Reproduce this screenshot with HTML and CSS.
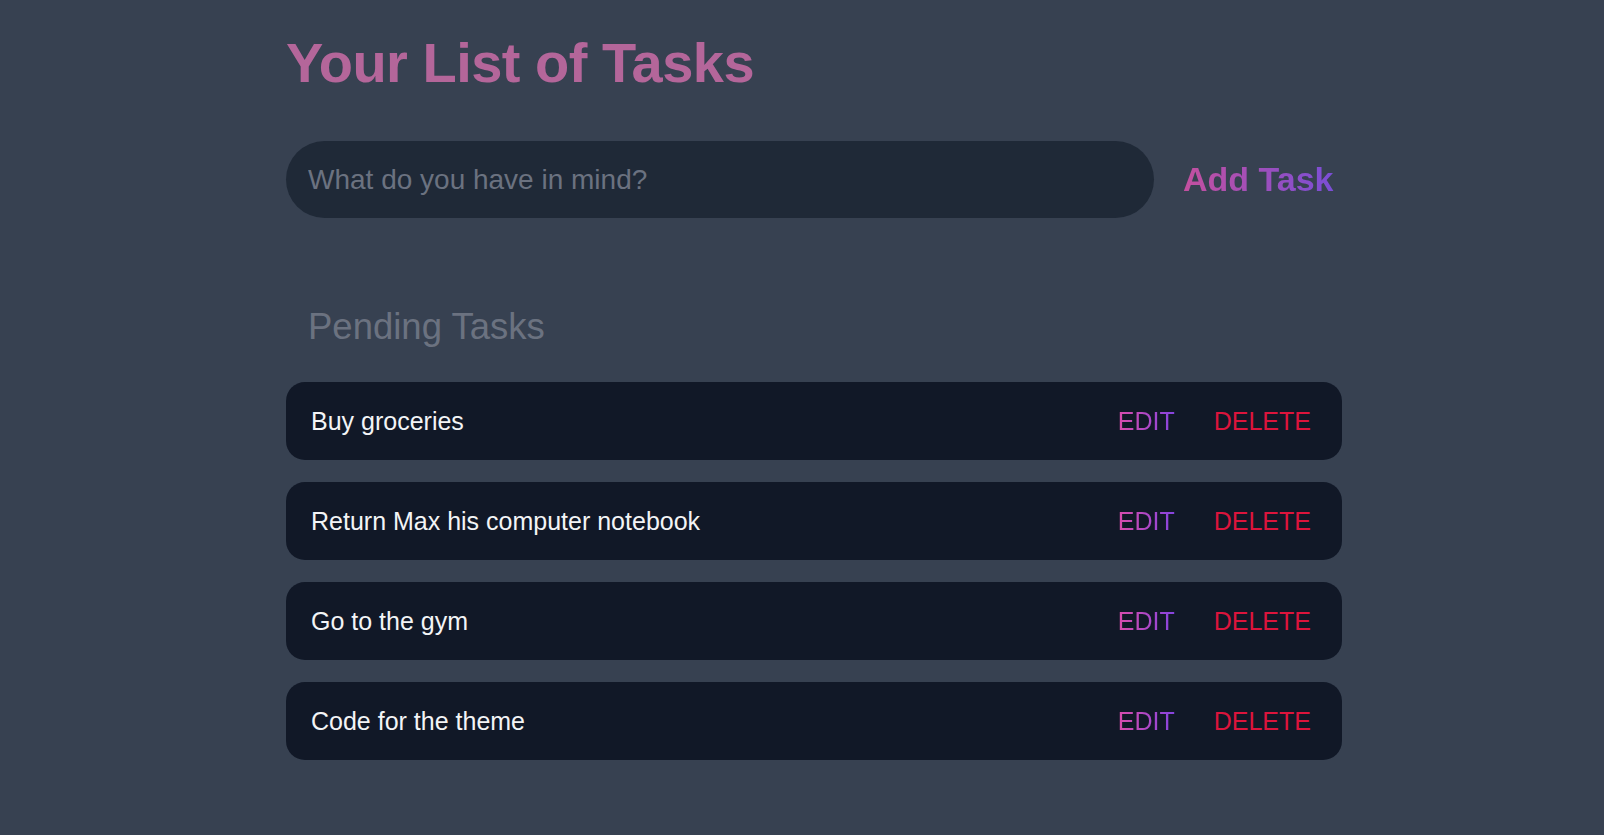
FILE: index.html
```html
<!DOCTYPE html>
<html lang="en">
<head>
<meta charset="utf-8">
<title>Your List of Tasks</title>
<link rel="stylesheet" href="styles.css">
</head>
<body>
<main class="app">
  <h1 class="title">Your List of Tasks</h1>
  <form class="add-form">
    <input class="task-input" type="text" placeholder="What do you have in mind?">
    <button class="add-btn" type="button"><span class="grad-text">Add Task</span></button>
  </form>
  <h2 class="section-title">Pending Tasks</h2>
  <ul class="task-list">
    <li class="task">
      <span class="task-text">Buy groceries</span>
      <div class="actions"><button class="edit"><span class="grad-edit">EDIT</span></button><button class="delete">DELETE</button></div>
    </li>
    <li class="task">
      <span class="task-text">Return Max his computer notebook</span>
      <div class="actions"><button class="edit"><span class="grad-edit">EDIT</span></button><button class="delete">DELETE</button></div>
    </li>
    <li class="task">
      <span class="task-text">Go to the gym</span>
      <div class="actions"><button class="edit"><span class="grad-edit">EDIT</span></button><button class="delete">DELETE</button></div>
    </li>
    <li class="task">
      <span class="task-text">Code for the theme</span>
      <div class="actions"><button class="edit"><span class="grad-edit">EDIT</span></button><button class="delete">DELETE</button></div>
    </li>
  </ul>
</main>
</body>
</html>
```

FILE: styles.css
```css
* { box-sizing: border-box; }
html, body { margin: 0; padding: 0; }
body {
  background: #374151;
  font-family: "Liberation Sans", Arial, sans-serif;
  min-height: 835px;
}
.app {
  width: 1056px;
  margin-left: 286px;
  padding-top: 35px;
}
.title {
  margin: 0;
  font-size: 56px;
  line-height: 56px;
  font-weight: 700;
  color: #b4669a;
  letter-spacing: -0.5px;
}
.add-form {
  margin-top: 50px;
  display: flex;
  align-items: center;
  gap: 29px;
}
.task-input {
  width: 868px;
  height: 77px;
  border: none;
  outline: none;
  border-radius: 39px;
  background: #1f2937;
  padding: 0 22px;
  font-family: inherit;
  font-size: 28px;
  color: #e5e7eb;
}
.task-input::placeholder { color: #6b7280; }
.add-btn {
  background: none;
  border: none;
  padding: 0;
  font-family: inherit;
  font-size: 34px;
  font-weight: 700;
  cursor: pointer;
}
.grad-text {
  background: linear-gradient(90deg, #c4509f, #7a4ed6);
  -webkit-background-clip: text;
  background-clip: text;
  color: transparent;
}
.section-title {
  margin: 89px 0 0;
  padding-left: 22px;
  font-size: 36.5px;
  line-height: 40px;
  font-weight: 400;
  color: #6b7280;
}
.task-list {
  list-style: none;
  margin: 35px 0 0;
  padding: 0;
  display: flex;
  flex-direction: column;
  gap: 22px;
}
.task {
  height: 78px;
  background: #111827;
  border-radius: 19px;
  display: flex;
  align-items: center;
  justify-content: space-between;
  padding: 0 31px 0 25px;
}
.task-text {
  color: #f3f4f6;
  font-size: 25px;
}
.actions {
  display: flex;
  align-items: center;
  gap: 39px;
}
.actions button {
  background: none;
  border: none;
  padding: 0;
  font-family: inherit;
  font-size: 25px;
  cursor: pointer;
}
.grad-edit {
  background: linear-gradient(90deg, #d94cab, #8544e0);
  -webkit-background-clip: text;
  background-clip: text;
  color: transparent;
}
.delete { color: #dc143c; }
```
